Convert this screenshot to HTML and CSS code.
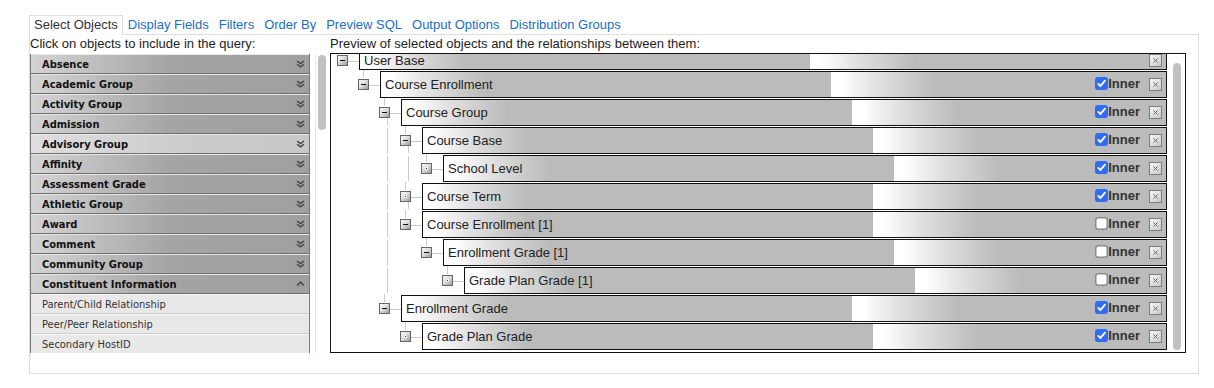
FILE: index.html
```html
<!DOCTYPE html>
<html>
<head>
<meta charset="utf-8">
<link rel="stylesheet" href="styles.css">
</head>
<body>
<div class="page">
  <div class="tabs">
    <span class="tab active">Select Objects</span>
    <span class="tab">Display Fields</span>
    <span class="tab">Filters</span>
    <span class="tab">Order By</span>
    <span class="tab">Preview SQL</span>
    <span class="tab">Output Options</span>
    <span class="tab">Distribution Groups</span>
    <span class="tab-fill"></span>
  </div>
  <div class="panel">
    <div class="left">
      <div class="label">Click on objects to include in the query:</div>
      <div class="lwrap">
        <div class="list">
          <div class="cat"><span>Absence</span><svg class="chev" width="9" height="8" viewBox="0 0 9 8"><path d="M1 1 L4.5 3.6 L8 1 M1 4.2 L4.5 6.8 L8 4.2"/></svg></div>
          <div class="cat"><span>Academic Group</span><svg class="chev" width="9" height="8" viewBox="0 0 9 8"><path d="M1 1 L4.5 3.6 L8 1 M1 4.2 L4.5 6.8 L8 4.2"/></svg></div>
          <div class="cat"><span>Activity Group</span><svg class="chev" width="9" height="8" viewBox="0 0 9 8"><path d="M1 1 L4.5 3.6 L8 1 M1 4.2 L4.5 6.8 L8 4.2"/></svg></div>
          <div class="cat"><span>Admission</span><svg class="chev" width="9" height="8" viewBox="0 0 9 8"><path d="M1 1 L4.5 3.6 L8 1 M1 4.2 L4.5 6.8 L8 4.2"/></svg></div>
          <div class="cat hover"><span>Advisory Group</span><svg class="chev" width="9" height="8" viewBox="0 0 9 8"><path d="M1 1 L4.5 3.6 L8 1 M1 4.2 L4.5 6.8 L8 4.2"/></svg></div>
          <div class="cat"><span>Affinity</span><svg class="chev" width="9" height="8" viewBox="0 0 9 8"><path d="M1 1 L4.5 3.6 L8 1 M1 4.2 L4.5 6.8 L8 4.2"/></svg></div>
          <div class="cat"><span>Assessment Grade</span><svg class="chev" width="9" height="8" viewBox="0 0 9 8"><path d="M1 1 L4.5 3.6 L8 1 M1 4.2 L4.5 6.8 L8 4.2"/></svg></div>
          <div class="cat"><span>Athletic Group</span><svg class="chev" width="9" height="8" viewBox="0 0 9 8"><path d="M1 1 L4.5 3.6 L8 1 M1 4.2 L4.5 6.8 L8 4.2"/></svg></div>
          <div class="cat"><span>Award</span><svg class="chev" width="9" height="8" viewBox="0 0 9 8"><path d="M1 1 L4.5 3.6 L8 1 M1 4.2 L4.5 6.8 L8 4.2"/></svg></div>
          <div class="cat"><span>Comment</span><svg class="chev" width="9" height="8" viewBox="0 0 9 8"><path d="M1 1 L4.5 3.6 L8 1 M1 4.2 L4.5 6.8 L8 4.2"/></svg></div>
          <div class="cat"><span>Community Group</span><svg class="chev" width="9" height="8" viewBox="0 0 9 8"><path d="M1 1 L4.5 3.6 L8 1 M1 4.2 L4.5 6.8 L8 4.2"/></svg></div>
          <div class="cat"><span>Constituent Information</span><svg class="chev up" width="9" height="8" viewBox="0 0 9 8"><path d="M1 5.5 L4.5 2 L8 5.5"/><path class="lt" d="M2.2 6.6 L4.5 4.3 L6.8 6.6"/></svg></div>
          <div class="item">Parent/Child Relationship</div>
          <div class="item">Peer/Peer Relationship</div>
          <div class="item">Secondary HostID</div>
        </div>
        <div class="vtrack"><div class="thumb"></div></div>
      </div>
    </div>
    <div class="right">
      <div class="label r">Preview of selected objects and the relationships between them:</div>
      <div class="tree">
        <div class="rows">
          <div class="trow root">
            <span class="tg noup"><span class="tbox minus"></span></span>
            <div class="node"><span class="name">User Base</span><span class="xb"><svg width="13" height="13" viewBox="0 0 13 13"><path d="M4.5 4.5 L8.5 8.5 M8.5 4.5 L4.5 8.5"/></svg></span></div>
          </div>
          <div class="trow">
            <span class="ind"></span>
            <span class="tg"><span class="tbox minus"></span></span>
            <div class="node"><span class="name">Course Enrollment</span><svg class="chk" width="13" height="13" viewBox="0 0 13 13"><rect width="13" height="13" rx="3"/><path d="M3.3 6.9 L5.4 9.1 L9.9 3.6"/></svg><span class="inner">Inner</span><span class="xb"><svg width="13" height="13" viewBox="0 0 13 13"><path d="M4.5 4.5 L8.5 8.5 M8.5 4.5 L4.5 8.5"/></svg></span></div>
          </div>
          <div class="trow">
            <span class="ind"></span><span class="ind"></span>
            <span class="tg dn"><span class="tbox minus"></span></span>
            <div class="node"><span class="name">Course Group</span><svg class="chk" width="13" height="13" viewBox="0 0 13 13"><rect width="13" height="13" rx="3"/><path d="M3.3 6.9 L5.4 9.1 L9.9 3.6"/></svg><span class="inner">Inner</span><span class="xb"><svg width="13" height="13" viewBox="0 0 13 13"><path d="M4.5 4.5 L8.5 8.5 M8.5 4.5 L4.5 8.5"/></svg></span></div>
          </div>
          <div class="trow">
            <span class="ind"></span><span class="ind"></span><span class="ind g"></span>
            <span class="tg dn"><span class="tbox minus"></span></span>
            <div class="node"><span class="name">Course Base</span><svg class="chk" width="13" height="13" viewBox="0 0 13 13"><rect width="13" height="13" rx="3"/><path d="M3.3 6.9 L5.4 9.1 L9.9 3.6"/></svg><span class="inner">Inner</span><span class="xb"><svg width="13" height="13" viewBox="0 0 13 13"><path d="M4.5 4.5 L8.5 8.5 M8.5 4.5 L4.5 8.5"/></svg></span></div>
          </div>
          <div class="trow">
            <span class="ind"></span><span class="ind"></span><span class="ind g"></span><span class="ind g"></span>
            <span class="tg"><span class="tbox dot"></span></span>
            <div class="node"><span class="name">School Level</span><svg class="chk" width="13" height="13" viewBox="0 0 13 13"><rect width="13" height="13" rx="3"/><path d="M3.3 6.9 L5.4 9.1 L9.9 3.6"/></svg><span class="inner">Inner</span><span class="xb"><svg width="13" height="13" viewBox="0 0 13 13"><path d="M4.5 4.5 L8.5 8.5 M8.5 4.5 L4.5 8.5"/></svg></span></div>
          </div>
          <div class="trow">
            <span class="ind"></span><span class="ind"></span><span class="ind g"></span>
            <span class="tg dn"><span class="tbox dot"></span></span>
            <div class="node"><span class="name">Course Term</span><svg class="chk" width="13" height="13" viewBox="0 0 13 13"><rect width="13" height="13" rx="3"/><path d="M3.3 6.9 L5.4 9.1 L9.9 3.6"/></svg><span class="inner">Inner</span><span class="xb"><svg width="13" height="13" viewBox="0 0 13 13"><path d="M4.5 4.5 L8.5 8.5 M8.5 4.5 L4.5 8.5"/></svg></span></div>
          </div>
          <div class="trow">
            <span class="ind"></span><span class="ind"></span><span class="ind g"></span>
            <span class="tg"><span class="tbox minus"></span></span>
            <div class="node"><span class="name">Course Enrollment [1]</span><svg class="chk off" width="13" height="13" viewBox="0 0 13 13"><rect x="0.75" y="0.75" width="11.5" height="11.5" rx="2.5"/></svg><span class="inner">Inner</span><span class="xb"><svg width="13" height="13" viewBox="0 0 13 13"><path d="M4.5 4.5 L8.5 8.5 M8.5 4.5 L4.5 8.5"/></svg></span></div>
          </div>
          <div class="trow">
            <span class="ind"></span><span class="ind"></span><span class="ind g"></span><span class="ind"></span>
            <span class="tg"><span class="tbox minus"></span></span>
            <div class="node"><span class="name">Enrollment Grade [1]</span><svg class="chk off" width="13" height="13" viewBox="0 0 13 13"><rect x="0.75" y="0.75" width="11.5" height="11.5" rx="2.5"/></svg><span class="inner">Inner</span><span class="xb"><svg width="13" height="13" viewBox="0 0 13 13"><path d="M4.5 4.5 L8.5 8.5 M8.5 4.5 L4.5 8.5"/></svg></span></div>
          </div>
          <div class="trow">
            <span class="ind"></span><span class="ind"></span><span class="ind g"></span><span class="ind"></span><span class="ind"></span>
            <span class="tg"><span class="tbox dot"></span></span>
            <div class="node"><span class="name">Grade Plan Grade [1]</span><svg class="chk off" width="13" height="13" viewBox="0 0 13 13"><rect x="0.75" y="0.75" width="11.5" height="11.5" rx="2.5"/></svg><span class="inner">Inner</span><span class="xb"><svg width="13" height="13" viewBox="0 0 13 13"><path d="M4.5 4.5 L8.5 8.5 M8.5 4.5 L4.5 8.5"/></svg></span></div>
          </div>
          <div class="trow">
            <span class="ind"></span><span class="ind"></span>
            <span class="tg"><span class="tbox minus"></span></span>
            <div class="node"><span class="name">Enrollment Grade</span><svg class="chk" width="13" height="13" viewBox="0 0 13 13"><rect width="13" height="13" rx="3"/><path d="M3.3 6.9 L5.4 9.1 L9.9 3.6"/></svg><span class="inner">Inner</span><span class="xb"><svg width="13" height="13" viewBox="0 0 13 13"><path d="M4.5 4.5 L8.5 8.5 M8.5 4.5 L4.5 8.5"/></svg></span></div>
          </div>
          <div class="trow">
            <span class="ind"></span><span class="ind"></span><span class="ind"></span>
            <span class="tg"><span class="tbox dot"></span></span>
            <div class="node"><span class="name">Grade Plan Grade</span><svg class="chk" width="13" height="13" viewBox="0 0 13 13"><rect width="13" height="13" rx="3"/><path d="M3.3 6.9 L5.4 9.1 L9.9 3.6"/></svg><span class="inner">Inner</span><span class="xb"><svg width="13" height="13" viewBox="0 0 13 13"><path d="M4.5 4.5 L8.5 8.5 M8.5 4.5 L4.5 8.5"/></svg></span></div>
          </div>
        </div>
        <div class="vbar"><div class="thumb"></div></div>
      </div>
    </div>
  </div>
</div>
</body>
</html>
```

FILE: styles.css
```css
html, body {
  margin: 0;
  padding: 0;
  background: #fff;
}
body {
  font-family: "Liberation Sans", Arial, sans-serif;
  color: #222;
}
.page {
  padding: 15px 0 0 29px;
  width: 1170px;
}

/* tabs */
.tabs {
  display: flex;
  height: 20px;
  align-items: stretch;
}
.tab {
  font-size: 13px;
  line-height: 18px;
  height: 20px;
  box-sizing: border-box;
  padding: 1px 5px 0;
  color: #1b6ec2;
  white-space: nowrap;
  border-bottom: 1px solid #ddd;
}
.tab.active {
  color: #333;
  padding: 0 4px;
  border: 1px solid #ddd;
  border-bottom: 1px solid #fff;
  background: #fff;
}
.tab-fill {
  flex: 1;
  border-bottom: 1px solid #ddd;
}

/* panel */
.panel {
  display: flex;
  height: 338px;
  border: 1px solid #ddd;
  border-top: 0;
}
.left {
  width: 300px;
  flex: none;
}
.right {
  flex: 1;
}
.label {
  font-size: 13px;
  line-height: 15px;
  padding-top: 1px;
  height: 19px;
  box-sizing: border-box;
  color: #222;
  white-space: nowrap;
}
.label.r {
  height: 18px;
}

/* left list */
.lwrap {
  display: flex;
}
.list {
  width: 280px;
  height: 299px;
  box-sizing: border-box;
  overflow: hidden;
  border-left: 1px solid #777;
  border-right: 1px solid #777;
  font-family: "DejaVu Sans Condensed", "DejaVu Sans", sans-serif;
  font-stretch: condensed;
  font-size: 11px;
}
.cat {
  height: 20px;
  box-sizing: border-box;
  display: flex;
  align-items: center;
  justify-content: space-between;
  padding: 0 4px 0 11px;
  border-top: 1px solid #e9e9e9;
  border-bottom: 1px solid #6e6e6e;
  background: linear-gradient(to right, #d2d2d2 0, #cfcfcf 15px, #a4a4a4 140px, #a0a0a0 100%);
  font-weight: bold;
  color: #111;
}
.cat.hover {
  background: linear-gradient(to right, #dedede 0, #d8d8d8 60px, #cbcbcb 160px, #c8c8c8 100%);
}
.chev path {
  fill: none;
  stroke: #444;
  stroke-width: 1.4;
}
.chev.up .lt {
  stroke: #888;
  stroke-width: 1;
}
.item {
  height: 20px;
  box-sizing: border-box;
  display: flex;
  align-items: center;
  padding-left: 11px;
  border-top: 1px solid #f7f7f7;
  border-bottom: 1px solid #cdcdcd;
  background: #e8e8e8;
  color: #333;
}
.vtrack {
  margin-left: 5px;
  width: 15px;
  height: 299px;
  box-sizing: border-box;
  border-left: 1px solid #e6e6e6;
}
.vtrack .thumb {
  margin: 1px 0 0 2px;
  width: 8px;
  height: 75px;
  border-radius: 4px;
  background: #c1c1c1;
}

/* tree */
.tree {
  width: 856px;
  height: 300px;
  box-sizing: border-box;
  border: 1px solid #111;
  display: flex;
}
.rows {
  flex: 1;
  overflow: hidden;
}
.vbar {
  width: 18px;
  flex: none;
}
.vbar .thumb {
  margin: 9px 0 0 6px;
  width: 8px;
  height: 287px;
  border-radius: 4px;
  background: #c1c1c1;
}
.trow {
  display: flex;
  height: 27px;
  margin-bottom: 1px;
  padding-left: 1px;
}
.trow.root {
  height: 19px;
  margin-top: -3px;
}
.ind {
  width: 21px;
  flex: none;
  position: relative;
}
.ind.g::before {
  content: "";
  position: absolute;
  left: 13px;
  top: 1px;
  bottom: 1px;
  width: 1px;
  background: #ccc;
}
.tg {
  width: 27px;
  flex: none;
  position: relative;
  display: flex;
  align-items: center;
}
.tg::before {
  content: "";
  position: absolute;
  left: 10px;
  top: -1px;
  height: 8px;
  width: 1px;
  background: #ccc;
}
.tg.noup::before {
  display: none;
}
.tg::after {
  content: "";
  position: absolute;
  left: 16px;
  width: 11px;
  top: 50%;
  height: 1px;
  background: #ccc;
}
.tg.dn {
  background: linear-gradient(#ccc, #ccc) 13px 19px / 1px 7px no-repeat;
}
.tbox {
  margin-left: 5px;
  width: 11px;
  height: 11px;
  box-sizing: border-box;
  border: 1px solid #666;
  background: linear-gradient(135deg, #fbfbfb 0, #dedede 45%, #9c9c9c 100%);
  display: flex;
  align-items: center;
  justify-content: center;
}
.tbox.minus::after {
  content: "";
  width: 5px;
  height: 1px;
  background: #111;
}
.tbox.dot::after {
  content: "";
  width: 1px;
  height: 1px;
  background: #333;
  box-shadow: 0 0 0 1px #f2f2f2;
}
.node {
  flex: 1;
  display: flex;
  align-items: center;
  border: 1px solid #111;
  padding: 0 4px;
  background: linear-gradient(to right, #fff 0, #fff 10px, #e2e2e2 45px, #bbb 105px, #bbb 450px) 0 0 / 450px 100% repeat-x;
  min-width: 0;
}
.name {
  flex: 1;
  font-size: 13px;
  color: #222;
  white-space: nowrap;
}
.chk {
  flex: none;
  margin-bottom: 3px;
}
.chk rect {
  fill: #2f6cf3;
}
.chk path {
  fill: none;
  stroke: #fff;
  stroke-width: 1.8;
  stroke-linecap: round;
  stroke-linejoin: round;
}
.chk.off rect {
  fill: #fff;
  stroke: #8b8b90;
  stroke-width: 1.5;
}
.inner {
  font-size: 13px;
  font-weight: bold;
  color: #333;
  margin-bottom: 3px;
}
.xb {
  margin-left: 9px;
  width: 13px;
  height: 13px;
  box-sizing: border-box;
  border: 1px solid #7d7d7d;
  background: linear-gradient(135deg, #f6f6f6 0, #dcdcdc 60%, #c8c8c8 100%);
  display: flex;
}
.xb svg {
  margin: -1px;
}
.xb path {
  stroke: #666;
  stroke-width: 1;
  fill: none;
}
```
